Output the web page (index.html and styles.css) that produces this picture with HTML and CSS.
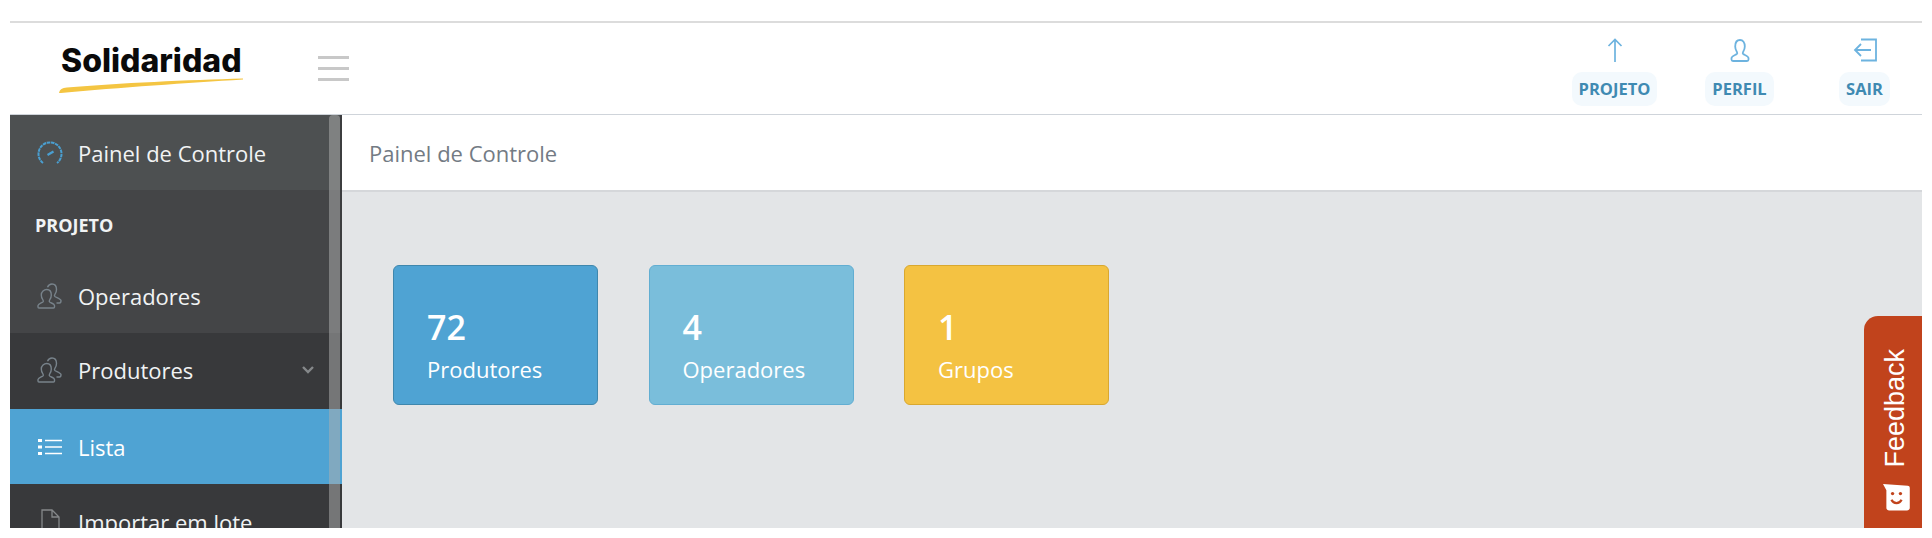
FILE: index.html
```html
<!DOCTYPE html>
<html lang="pt">
<head>
    <meta charset="UTF-8">
    <meta name="viewport" content="width=device-width, initial-scale=1.0">
    <title>Solidaridad - Painel de Controle</title>
    <link rel="stylesheet" href="styles.css">
</head>
<body>

<div class="frame">
    <header class="topbar">
        <div class="logo">
            <span class="logo-text">Solidaridad</span>
            <svg class="logo-swoosh" width="184" height="16" viewBox="0 0 184 16">
                <path d="M0 15 C1 11 3 10 8 9.500 C60 5 130 2 184 0.500 L184 1.500 C130 5 60 9.500 2 15 Z" fill="#f4c542"/>
            </svg>
        </div>
        <div class="burger"><span></span><span></span><span></span></div>
        <nav class="top-nav">
            <a class="top-link">
                <svg width="24" height="24" viewBox="0 0 24 24" fill="none" stroke="#6db3df" stroke-width="1.700"><path d="M12 24V1.500M5.500 8L12 1.500 18.500 8"/></svg>
                <span class="top-label">PROJETO</span>
            </a>
            <a class="top-link">
                <svg width="24" height="24" viewBox="0 0 24 24" fill="none" stroke="#6db3df" stroke-width="1.800"><path d="M5 23h14c1 0 1.500-.6 1.500-1.500V20c0-2-4-3-5.300-4-.7-.6-.5-1.500 0-2.300 1-1.500 1.600-3.200 1.600-5.200C16.800 4.500 15 2 12 2S7.200 4.500 7.200 8.500c0 2 .6 3.700 1.600 5.200.5.800.7 1.700 0 2.300C7.500 17 3.500 18 3.500 20v1.500C3.500 22.400 4 23 5 23z"/></svg>
                <span class="top-label">PERFIL</span>
            </a>
            <a class="top-link">
                <svg width="24" height="24" viewBox="0 0 24 24" fill="none" stroke="#6db3df" stroke-width="1.800"><path d="M8 1.500h15v21H8M18 12H2M8 6l-6 6 6 6"/></svg>
                <span class="top-label">SAIR</span>
            </a>
        </nav>
    </header>

    <div class="layout">
        <aside class="sidebar">
            <a class="side-item side-home">
                <svg class="side-icon" width="26" height="24" viewBox="0 0 26 24" fill="none" stroke="#4a9fd1" stroke-width="2"><path d="M6 22A11.500 11.500 0 1 1 20 22" stroke-dasharray="3.500 .7"/><path d="M10.500 14l6-3.500" stroke-width="2.200"/></svg>
                Painel de Controle
            </a>
            <div class="side-title">PROJETO</div>
            <a class="side-item side-plain">
                <svg class="side-icon" width="26" height="26" viewBox="0 0 26 26" fill="none" stroke="#78838b" stroke-width="1.400"><path d="M2 25h14.500c.6 0 1-.4 1-1v-1.500c0-1.500-3.500-2.500-4.800-3.500-.6-.5-.5-1.400 0-2.100 1-1.300 1.600-3 1.600-4.900 0-3.500-1.800-5.500-4.500-5.500S4.300 8.500 4.300 12c0 1.900.6 3.600 1.600 4.900.5.700.6 1.600 0 2.100C4.500 20 1 21 1 22.500V24c0 .6.400 1 1 1z"/><path d="M10.500 4.200C11.300 2.300 12.800 1 15 1c2.800 0 4.500 2 4.500 5.500 0 1.900-.6 3.600-1.600 4.900-.5.700-.6 1.600 0 2.100 1.400 1 6.100 2.500 6.100 4 0 1.500-.6 2.500-1.500 2.500H19.500"/></svg>
                Operadores
            </a>
            <a class="side-item side-dark side-open">
                <svg class="side-icon" width="26" height="26" viewBox="0 0 26 26" fill="none" stroke="#78838b" stroke-width="1.400"><path d="M2 25h14.500c.6 0 1-.4 1-1v-1.500c0-1.500-3.500-2.500-4.800-3.500-.6-.5-.5-1.400 0-2.100 1-1.300 1.600-3 1.600-4.900 0-3.500-1.800-5.500-4.500-5.500S4.300 8.500 4.300 12c0 1.900.6 3.600 1.600 4.900.5.700.6 1.600 0 2.100C4.500 20 1 21 1 22.500V24c0 .6.400 1 1 1z"/><path d="M10.500 4.200C11.300 2.300 12.800 1 15 1c2.800 0 4.500 2 4.500 5.500 0 1.900-.6 3.600-1.600 4.900-.5.700-.6 1.600 0 2.100 1.400 1 6.100 2.500 6.100 4 0 1.500-.6 2.500-1.500 2.500H19.500"/></svg>
                Produtores
                <svg class="side-chevron" width="14" height="10" viewBox="0 0 14 10" fill="none" stroke="#85888a" stroke-width="2.400"><path d="M2 2l5 5 5-5"/></svg>
            </a>
            <a class="side-item side-active">
                <svg class="side-icon" width="26" height="18" viewBox="0 0 26 18" fill="none" stroke="#fff" stroke-width="1.600"><path d="M8 2.500h17M8 9h17M8 15.500h17"/><path d="M1 2.500h4M1 9h4M1 15.500h4" stroke-width="3"/></svg>
                Lista
            </a>
            <a class="side-item side-dark">
                <svg class="side-icon" width="26" height="28" viewBox="0 0 26 28" fill="none" stroke="#85888a" stroke-width="1.300"><path d="M5 27V2h10l7 7v18M15 2v7h7"/></svg>
                Importar em lote
            </a>
            <div class="side-scroll"></div>
        </aside>

        <main class="content">
            <div class="breadcrumb">Painel de Controle</div>
            <section class="cards">
                <div class="card card-blue">
                    <div class="card-num">72</div>
                    <div class="card-label">Produtores</div>
                </div>
                <div class="card card-cyan">
                    <div class="card-num">4</div>
                    <div class="card-label">Operadores</div>
                </div>
                <div class="card card-yellow">
                    <div class="card-num">1</div>
                    <div class="card-label">Grupos</div>
                </div>
            </section>
            <div class="feedback">
                <svg class="feedback-icon" width="27" height="27" viewBox="0 0 24 24"><path d="M0 0l22 1.500c1 0 1.800.8 1.800 2V21c0 1.500-1 2.500-2.500 2.500H5.500C4 23.500 3 22.500 3 21V5.500z" fill="#fff"/><path d="M7.500 14c2 4 7 4 9 0" fill="none" stroke="#c1431c" stroke-width="2"/><circle cx="8.500" cy="8.500" r="1.500" fill="#c1431c"/><circle cx="15.500" cy="8.500" r="1.500" fill="#c1431c"/></svg>
                <span class="feedback-text">Feedback</span>
            </div>
        </main>
    </div>
</div>

</body>
</html>
```

FILE: styles.css
```css
html, body {
    margin: 0;
    height: 538px;
    overflow: hidden;
    background: #fff;
}
body {
    font-family: "Open Sans", "Noto Sans", sans-serif;
}
.frame {
    margin: 21px 10px 0;
    height: 507px;
    border-top: 2px solid #dcdcdc;
    box-sizing: border-box;
    display: flex;
    flex-direction: column;
    overflow: hidden;
}
.topbar {
    height: 92px;
    box-sizing: border-box;
    flex: none;
    display: flex;
    align-items: center;
    border-bottom: 1px solid #cfd4da;
    background: #fff;
}
.logo {
    width: 184px;
    margin-left: 49px;
    display: flex;
    flex-direction: column;
}
.logo-text {
    font-family: Inter, "Liberation Sans", sans-serif;
    font-weight: 800;
    font-size: 32px;
    line-height: 36px;
    padding-left: 2px;
    color: #0a0a0a;
    white-space: nowrap;
}
.logo-swoosh {
    margin-top: -1px;
}
.burger {
    margin-left: 75px;
    width: 31px;
    display: flex;
    flex-direction: column;
    gap: 8px;
}
.burger span {
    height: 3px;
    background: #c8c8c8;
}
.top-nav {
    margin-left: auto;
    align-self: flex-start;
    display: flex;
    gap: 10px;
    padding-top: 15px;
}
.top-link {
    width: 115px;
    display: flex;
    flex-direction: column;
    align-items: center;
    gap: 10px;
}
.top-label {
    font-size: 16.500px;
    font-weight: 700;
    line-height: 34px;
    padding: 0 7px;
    border-radius: 10px;
    background: #f3f9fd;
    color: #3f8ab2;
}
.layout {
    flex: 1;
    display: flex;
    min-height: 0;
}
.sidebar {
    width: 332px;
    flex: none;
    position: relative;
    background: #38393b;
    color: #f1f3f4;
    font-size: 22px;
}
.side-item {
    height: 75px;
    display: flex;
    align-items: center;
    padding-left: 27px;
    box-sizing: border-box;
}
.side-icon {
    width: 26px;
    margin-right: 15px;
    flex: none;
}
.side-home {
    background: #4d5051;
    box-shadow: inset -2px 0 #3c3d3f;
}
.side-title {
    height: 68px;
    box-sizing: border-box;
    padding: 22px 0 0 25px;
    font-size: 18px;
    line-height: 26px;
    font-weight: 700;
    background: #444547;
    box-shadow: inset -2px 0 #3c3d3f;
}
.side-plain {
    background: #444547;
    box-shadow: inset -2px 0 #3c3d3f;
}
.side-dark {
    background: #38393b;
}
.side-open {
    height: 76px;
    padding-bottom: 2px;
}
.side-active {
    background: #4fa3d3;
    color: #fff;
}
.side-chevron {
    margin-left: auto;
    margin-right: 27px;
}
.side-scroll {
    position: absolute;
    top: 0;
    bottom: 0;
    right: 2px;
    width: 11px;
    border-radius: 4px 4px 0 0;
    background: rgba(175, 175, 175, .52);
}
.content {
    flex: 1;
    position: relative;
    background: #e3e5e7;
}
.breadcrumb {
    height: 77px;
    box-sizing: border-box;
    padding-left: 27px;
    display: flex;
    align-items: center;
    background: #fff;
    border-bottom: 2px solid #d5d7da;
    font-size: 22px;
    color: #737b84;
}
.cards {
    display: flex;
    gap: 50.500px;
    padding: 73px 0 0 51px;
}
.card {
    width: 205px;
    height: 140px;
    box-sizing: border-box;
    padding: 38px 0 0 33px;
    border: 1px solid;
    border-radius: 6px;
    color: #fff;
}
.card-blue {
    background: #4fa3d3;
    border-color: #3f87ad;
}
.card-cyan {
    background: #7abedb;
    border-color: #62aed2;
}
.card-yellow {
    background: #f4c242;
    border-color: #d9a82f;
}
.card-num {
    font-size: 34px;
    font-weight: 600;
    line-height: 46px;
}
.card-label {
    font-size: 22px;
    line-height: 38px;
}
.feedback {
    position: absolute;
    right: 0;
    top: 201px;
    width: 58px;
    height: 212px;
    border-radius: 14px 0 0 0;
    background: #c1431c;
    display: flex;
    flex-direction: column-reverse;
    align-items: center;
    gap: 16px;
    padding-bottom: 17px;
    box-sizing: border-box;
}
.feedback-icon {
    flex: none;
    margin-left: 6px;
}
.feedback-text {
    writing-mode: vertical-rl;
    transform: rotate(180deg);
    margin-left: 5px;
    font-family: "Liberation Sans", Arial, sans-serif;
    font-size: 27px;
    color: #fff;
}
```
